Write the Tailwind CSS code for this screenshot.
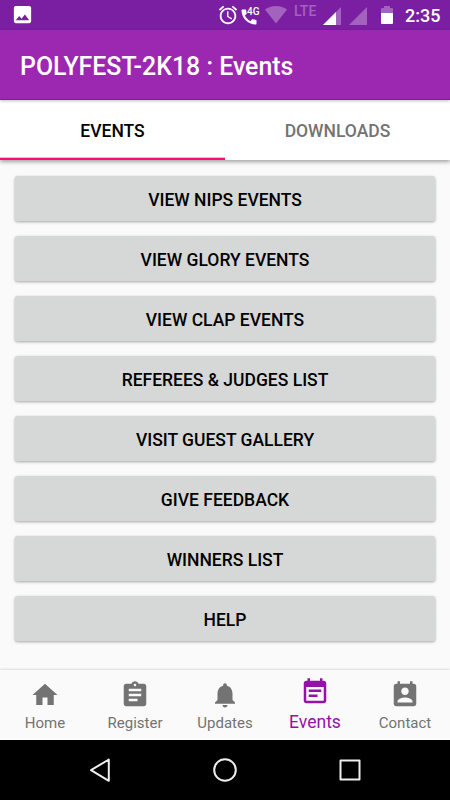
<!DOCTYPE html>
<html lang="en">
<head>
    <meta charset="UTF-8">
    <meta name="viewport" content="width=device-width, initial-scale=1.0">
    <title>POLYFEST-2K18 : Events</title>
    <script src="https://cdn.jsdelivr.net/npm/@tailwindcss/browser@4"></script>
    <style>
        body {
            font-family: Roboto, sans-serif;
        }
    </style>
</head>
<body class="bg-[#fafafa] w-[450px] h-[800px] flex flex-col overflow-hidden">
    <!-- Status bar -->
    <div class="h-[30px] shrink-0 bg-[#7b1fa2] text-white flex items-start">
        <svg class="w-[23px] h-[23px] ml-[11px] mt-[3px]" viewBox="0 0 24 24" fill="currentColor"><path d="M21 19V5c0-1.100-.9-2-2-2H5c-1.100 0-2 .9-2 2v14c0 1.100.9 2 2 2h14c1.100 0 2-.9 2-2zM8.500 13.500l2.500 3.010L14.500 12l4.500 6H5l3.500-4.500z"/></svg>
        <svg class="w-[22px] h-[22px] ml-auto mt-1" viewBox="0 0 24 24" fill="currentColor"><path d="M22 5.720l-4.600-3.860-1.290 1.530 4.600 3.860L22 5.720zM7.880 3.390L6.600 1.860 2 5.710l1.290 1.530 4.590-3.850zM12.500 8H11v6l4.750 2.850.75-1.230-4-2.370V8zM12 4c-4.970 0-9 4.030-9 9s4.020 9 9 9c4.970 0 9-4.030 9-9s-4.030-9-9-9zm0 16c-3.870 0-7-3.130-7-7s3.130-7 7-7 7 3.130 7 7-3.130 7-7 7z"/></svg>
        <div class="relative w-[26px] h-[30px]">
            <svg class="w-[20px] h-[20px] mt-[7px]" viewBox="0 0 24 24" fill="currentColor"><path d="M20.010 15.380c-1.230 0-2.420-.2-3.530-.56-.35-.12-.74-.03-1.010.24l-1.570 1.970c-2.830-1.350-5.480-3.900-6.890-6.830l1.950-1.660c.27-.28.35-.67.24-1.020-.37-1.110-.56-2.300-.56-3.530 0-.54-.45-.99-.99-.99H4.190C3.650 3 3 3.240 3 3.990 3 13.280 10.730 21 20.010 21c.71 0 .99-.63.99-1.180v-3.450c0-.54-.45-.99-.99-.99z"/></svg>
            <span class="absolute left-[8px] top-[6px] text-[10px] leading-3 font-medium">4G</span>
        </div>
        <svg class="w-[22px] h-[18px] mt-[6px] text-[#a362be]" viewBox="0 0 22 18" fill="currentColor"><path d="M11 17.500L0 3.500C3 1.200 6.700 0 11 0s8 1.200 11 3.500z"/></svg>
        <span class="w-[28px] pl-[7px] mt-[3px] text-[14px] leading-4 font-medium text-[#a362be]">LTE</span>
        <svg class="w-[18px] h-[18px] ml-[8px] mt-[7px]" viewBox="0 0 18 18"><path d="M0 18L18 0v18z" fill="#a362be"/><path d="M0 18L13 5v13z" fill="#fff"/></svg>
        <svg class="w-[18px] h-[18px] ml-[8px] mt-[7px]" viewBox="0 0 18 18"><path d="M0 18L18 0v18z" fill="#a362be"/></svg>
        <svg class="w-[12px] h-[18px] ml-[14px] mt-[6px]" viewBox="0 0 12 18"><path d="M0 7V3q0-1 1-1h2V0h6v2h2q1 0 1 1v4z" fill="#a362be"/><path d="M0 7h12v10q0 1-1 1H1q-1 0-1-1z" fill="#fff"/></svg>
        <span class="w-[57px] pl-[12px] mt-[4px] text-[18px] leading-6 font-medium">2:35</span>
    </div>

    <!-- App bar -->
    <div class="h-[70px] shrink-0 relative z-20 bg-[#9c27b0] border-b border-[#90129f] shadow-[0_1px_3px_rgba(0,0,0,0.25)] px-5 flex items-center">
        <h1 class="text-white text-[24.900px] font-medium leading-8 mt-1">POLYFEST-2K18 : Events</h1>
    </div>

    <!-- Tabs -->
    <div class="h-[60px] shrink-0 relative z-10 bg-white shadow-[0_2px_4px_rgba(0,0,0,0.35)] grid grid-cols-2 text-[17.500px] font-medium text-center leading-[62px]">
        <div class="h-[60px] text-black border-b-2 border-[#ff0a78] shadow-[inset_0_-1px_0_#ffb3d3]">EVENTS</div>
        <div class="h-[60px] text-[#737373]">DOWNLOADS</div>
    </div>

    <!-- Event buttons -->
    <main class="flex-1 px-[15px] pt-4 flex flex-col gap-[15px] text-[17.500px] text-black">
        <button class="h-[45px] bg-[#d6d8d7] rounded-[2.500px] shadow-[0_1px_3px_rgba(0,0,0,0.35)] pt-[3px] font-medium">VIEW NIPS EVENTS</button>
        <button class="h-[45px] bg-[#d6d8d7] rounded-[2.500px] shadow-[0_1px_3px_rgba(0,0,0,0.35)] pt-[3px] font-medium">VIEW GLORY EVENTS</button>
        <button class="h-[45px] bg-[#d6d8d7] rounded-[2.500px] shadow-[0_1px_3px_rgba(0,0,0,0.35)] pt-[3px] font-medium">VIEW CLAP EVENTS</button>
        <button class="h-[45px] bg-[#d6d8d7] rounded-[2.500px] shadow-[0_1px_3px_rgba(0,0,0,0.35)] pt-[3px] font-medium">REFEREES &amp; JUDGES LIST</button>
        <button class="h-[45px] bg-[#d6d8d7] rounded-[2.500px] shadow-[0_1px_3px_rgba(0,0,0,0.35)] pt-[3px] font-medium">VISIT GUEST GALLERY</button>
        <button class="h-[45px] bg-[#d6d8d7] rounded-[2.500px] shadow-[0_1px_3px_rgba(0,0,0,0.35)] pt-[3px] font-medium">GIVE FEEDBACK</button>
        <button class="h-[45px] bg-[#d6d8d7] rounded-[2.500px] shadow-[0_1px_3px_rgba(0,0,0,0.35)] pt-[3px] font-medium">WINNERS LIST</button>
        <button class="h-[45px] bg-[#d6d8d7] rounded-[2.500px] shadow-[0_1px_3px_rgba(0,0,0,0.35)] pt-[3px] font-medium">HELP</button>
    </main>

    <!-- Bottom navigation -->
    <nav class="h-[70px] shrink-0 bg-[#fafafa] shadow-[0_-1px_2px_rgba(0,0,0,0.12)] grid grid-cols-5 text-[15px] text-[#737373]">
        <div class="flex flex-col items-center pt-[10px]">
            <svg class="w-[30px] h-[30px]" viewBox="0 0 24 24" fill="currentColor"><path d="M10 20v-6h4v6h5v-8h3L12 3 2 12h3v8z"/></svg>
            <span class="leading-5 mt-[3px]">Home</span>
        </div>
        <div class="flex flex-col items-center pt-[10px]">
            <svg class="w-[30px] h-[30px]" viewBox="0 0 24 24" fill="currentColor"><path d="M19 3h-4.180C14.400 1.840 13.300 1 12 1c-1.300 0-2.400.84-2.820 2H5c-1.100 0-2 .9-2 2v14c0 1.100.9 2 2 2h14c1.100 0 2-.9 2-2V5c0-1.100-.9-2-2-2zm-7 0c.55 0 1 .45 1 1s-.45 1-1 1-1-.45-1-1 .45-1 1-1zm2 14H7v-2h7v2zm3-4H7v-2h10v2zm0-4H7V7h10v2z"/></svg>
            <span class="leading-5 mt-[3px]">Register</span>
        </div>
        <div class="flex flex-col items-center pt-[10px]">
            <svg class="w-[30px] h-[30px]" viewBox="0 0 24 24" fill="currentColor"><path d="M12 22c1.100 0 2-.9 2-2h-4c0 1.100.89 2 2 2zm6-6v-5c0-3.070-1.640-5.640-4.500-6.320V4c0-.83-.67-1.500-1.500-1.500s-1.500.67-1.500 1.500v.68C7.630 5.360 6 7.920 6 11v5l-2 2v1h16v-1l-2-2z"/></svg>
            <span class="leading-5 mt-[3px]">Updates</span>
        </div>
        <div class="flex flex-col items-center pt-[7px] text-[#9610aa]">
            <svg class="w-[30px] h-[30px]" viewBox="0 0 24 24" fill="currentColor"><path d="M17 10H7v2h10v-2zm2-7h-1V1h-2v2H8V1H6v2H5c-1.110 0-1.990.9-1.990 2L3 19c0 1.100.89 2 2 2h14c1.100 0 2-.9 2-2V5c0-1.100-.9-2-2-2zm0 16H5V8h14v11zm-5-5H7v2h7v-2z"/></svg>
            <span class="text-[17.500px] leading-5 mt-[5px]">Events</span>
        </div>
        <div class="flex flex-col items-center pt-[10px]">
            <svg class="w-[30px] h-[30px]" viewBox="0 0 24 24" fill="currentColor"><path d="M19 3h-1V1h-2v2H8V1H6v2H5c-1.110 0-2 .9-2 2v14c0 1.100.89 2 2 2h14c1.100 0 2-.9 2-2V5c0-1.100-.9-2-2-2zm-7 3c1.660 0 3 1.340 3 3s-1.340 3-3 3-3-1.340-3-3 1.340-3 3-3zm6 12H6v-1c0-2 4-3.100 6-3.100s6 1.100 6 3.100v1z"/></svg>
            <span class="leading-5 mt-[3px]">Contact</span>
        </div>
    </nav>

    <!-- System navigation -->
    <div class="h-[60px] shrink-0 relative bg-black flex items-center justify-center gap-[95px]">
        <svg class="w-[30px] h-[30px]" viewBox="0 0 30 30" fill="none" stroke="#eee" stroke-width="2" stroke-linejoin="round"><path d="M23.800 4.500v21.300L6 15.200z"/></svg>
        <svg class="w-[30px] h-[30px]" viewBox="0 0 30 30" fill="none" stroke="#eee" stroke-width="2"><circle cx="15" cy="15" r="10.800"/></svg>
        <svg class="w-[30px] h-[30px]" viewBox="0 0 30 30" fill="none" stroke="#eee" stroke-width="2" stroke-linejoin="round"><path d="M5.500 5.500h19v19h-19z"/></svg>
    </div>
</body>
</html>
